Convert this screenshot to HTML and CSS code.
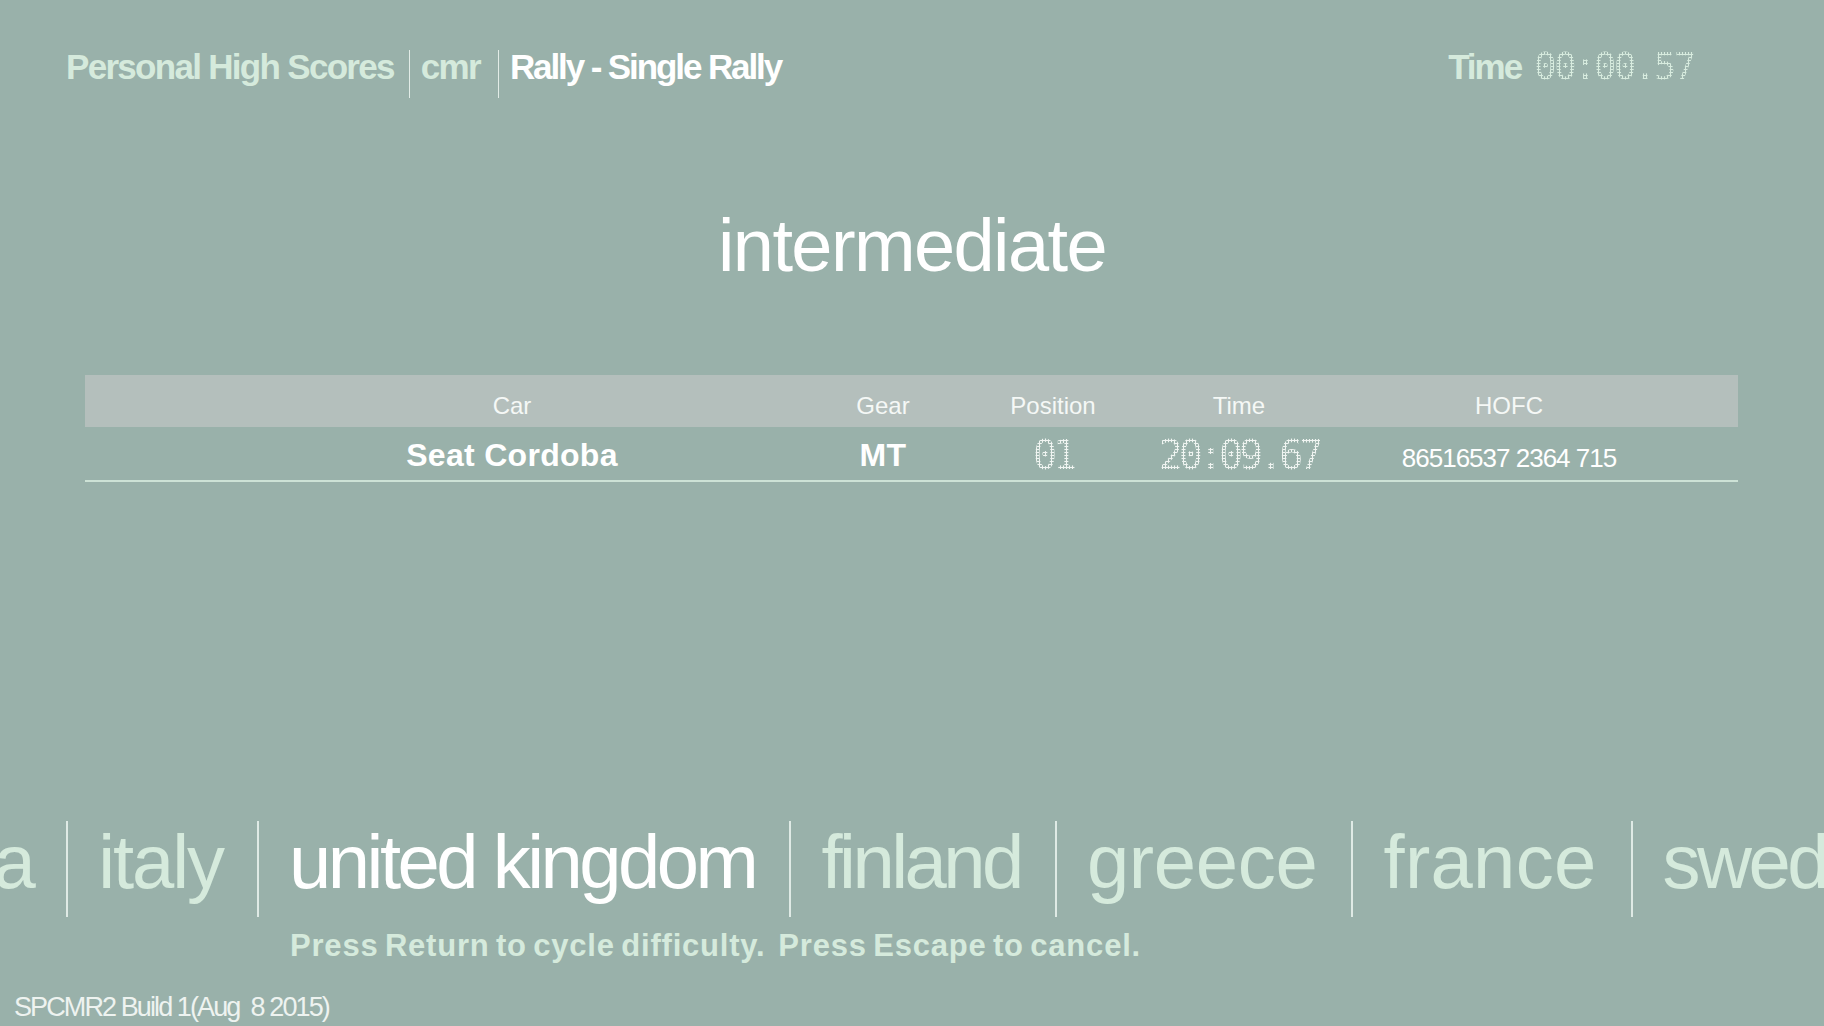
FILE: index.html
```html
<!DOCTYPE html>
<html lang="en">
<head>
<meta charset="utf-8">
<title>Personal High Scores</title>
<link rel="stylesheet" href="styles.css">
</head>
<body>
<div class="screen">
  <header class="top">
    <div class="crumbs">
      <span class="crumb dim">Personal High Scores</span>
      <span class="sep"></span>
      <span class="crumb dim">cmr</span>
      <span class="sep sep-wide"></span>
      <span class="crumb bright tight">Rally - Single Rally</span>
    </div>
    <div class="clock">
      <span class="clock-label">Time</span>
      <span class="dots clock-value">00:00.57</span>
    </div>
  </header>

  <h1 class="title">intermediate</h1>

  <div class="scores">
    <div class="row head">
      <span class="cell">Car</span>
      <span class="cell">Gear</span>
      <span class="cell">Position</span>
      <span class="cell">Time</span>
      <span class="cell">HOFC</span>
    </div>
    <div class="row entry">
      <span class="cell strong">Seat Cordoba</span>
      <span class="cell strong">MT</span>
      <span class="cell dots cell-dots">01</span>
      <span class="cell dots cell-dots">20:09.67</span>
      <span class="cell code">86516537 2364 715</span>
    </div>
  </div>

  <div class="countries">
    <span class="country first">kenya</span>
    <span class="country loose-1">italy</span>
    <span class="country current">united kingdom</span>
    <span class="country">finland</span>
    <span class="country loose-2">greece</span>
    <span class="country loose-3">france</span>
    <span class="country">sweden</span>
  </div>

  <p class="hint">Press Return to cycle difficulty.&nbsp; Press Escape to cancel.</p>
  <p class="build">SPCMR2 Build 1(Aug&nbsp; 8 2015)</p>
</div>
</body>
</html>
```
FILE: styles.css
```css
* { box-sizing: border-box; }

html, body {
  margin: 0;
  padding: 0;
  background: #99b1aa;
}

.screen {
  width: 1824px;
  height: 1026px;
  overflow: hidden;
  background: #99b1aa;
  font-family: "Liberation Sans", Arial, sans-serif;
  color: #ffffff;
  display: flex;
  flex-direction: column;
}

/* ---------- top bar ---------- */
.top {
  display: flex;
  justify-content: space-between;
  align-items: flex-start;
  padding: 50px 130px 0 66px;
  height: 98px;
}

.crumbs {
  display: flex;
  align-items: flex-start;
  height: 48px;
}

.crumb {
  font-weight: 700;
  font-size: 35px;
  line-height: 34px;
  letter-spacing: -1.7px;
  white-space: nowrap;
}

.crumb.tight { letter-spacing: -2.1px; }

.dim { color: #d5eadc; }
.bright { color: #ffffff; }

.sep {
  align-self: stretch;
  width: 1px;
  background: #e2ece7;
  margin: 0 11px 0 15px;
}

.sep.sep-wide { margin-left: 18px; }

.clock {
  display: flex;
  align-items: baseline;
  gap: 13px;
  color: #d5eadc;
}

.clock-label {
  font-weight: 700;
  font-size: 35px;
  line-height: 34px;
  letter-spacing: -2px;
}

.dots {
  font-family: "DejaVu Sans Mono", "Liberation Mono", monospace;
  -webkit-mask-image: radial-gradient(circle, #000 0 1.05px, transparent 1.45px);
  -webkit-mask-size: 3px 3px;
  mask-image: radial-gradient(circle, #000 0 1.05px, transparent 1.45px);
  mask-size: 3px 3px;
}

.clock-value {
  font-size: 37px;
  line-height: 34px;
  letter-spacing: -2.3px;
  color: #d8ecdf;
}

/* ---------- title ---------- */
.title {
  margin: 111px 0 0;
  text-align: center;
  font-weight: 400;
  font-size: 74px;
  line-height: 74px;
  letter-spacing: -1.6px;
  color: #ffffff;
}

/* ---------- table ---------- */
.scores {
  margin: 92px 0 0 85px;
  width: 1653px;
}

.row {
  display: grid;
  grid-template-columns: 612px 130px 210px 162px 378px;
  padding-left: 121px;
}

.cell {
  display: flex;
  justify-content: center;
  white-space: nowrap;
}

.head {
  background: #b4bfbc;
  height: 52px;
  padding-top: 9px;
  font-size: 24px;
  line-height: 43px;
  color: #f5f8f6;
}

.entry {
  height: 55px;
  border-bottom: 2px solid #cde2d6;
  align-items: center;
}

.strong {
  font-weight: 700;
  font-size: 32px;
  line-height: 51px;
  letter-spacing: 0.3px;
}

.cell-dots {
  font-size: 40px;
  line-height: 51px;
  letter-spacing: -4px;
  color: #f0f5f2;
}

.code {
  font-size: 26px;
  line-height: 51px;
  letter-spacing: -1px;
  padding-top: 6px;
}

/* ---------- country strip ---------- */
.countries {
  margin: 339px 0 0 -183px;
  display: flex;
  white-space: nowrap;
  height: 96px;
}

.country {
  flex: none;
  height: 96px;
  padding: 0 34px 14px 30px;
  font-size: 76px;
  line-height: 82px;
  letter-spacing: -3.5px;
  color: #d5eadc;
  border-left: 2px solid #dfeae5;
}

.country.first { border-left: none; }
.country.current { color: #ffffff; }
.country.loose-1 { letter-spacing: -2.1px; }
.country.loose-2 { letter-spacing: -0.3px; }
.country.loose-3 { letter-spacing: 0.3px; }

/* ---------- footer text ---------- */
.hint {
  margin: 14px 0 0 290px;
  font-weight: 700;
  font-size: 31px;
  line-height: 30px;
  letter-spacing: 0.8px;
  word-spacing: -3px;
  color: #d5eadc;
}

.build {
  margin: 33px 0 0 14px;
  font-size: 27px;
  line-height: 27px;
  letter-spacing: -1.9px;
  color: #eef3f0;
}
```
